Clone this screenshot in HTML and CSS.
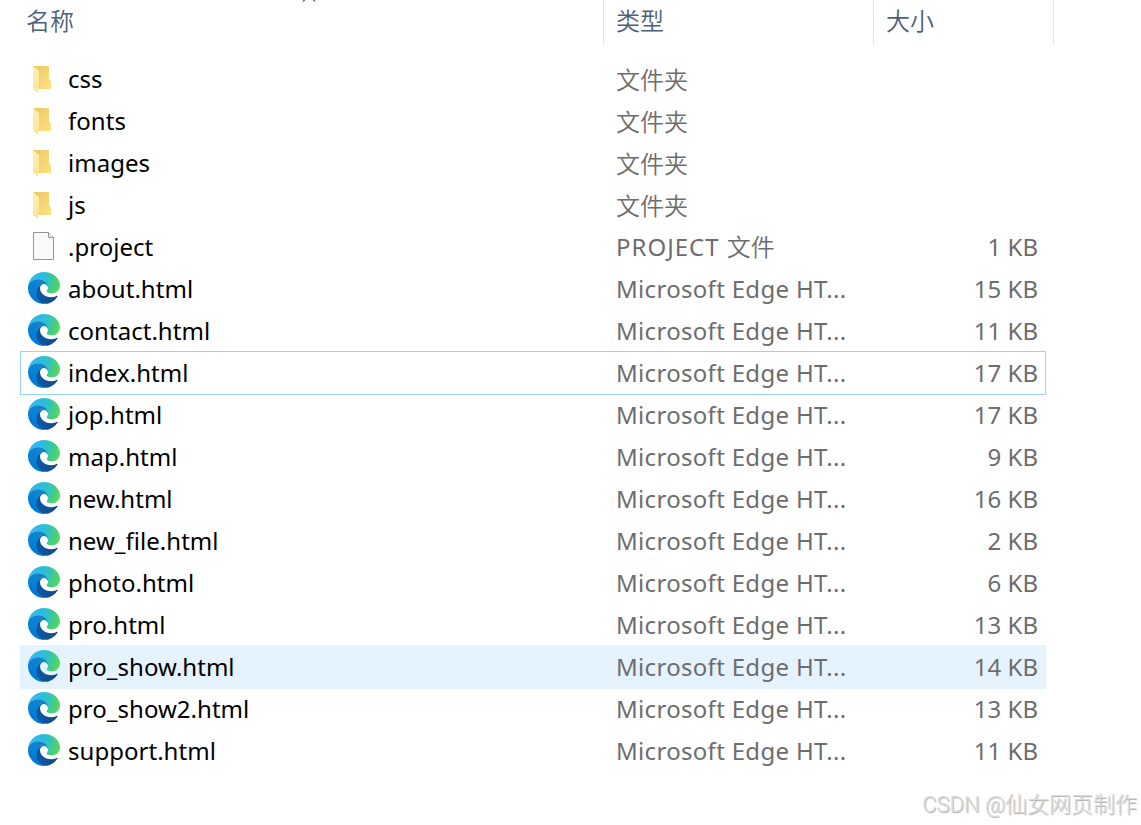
FILE: index.html
```html
<!DOCTYPE html>
<html lang="zh-CN">
<head>
    <meta charset="utf-8">
    <title>文件</title>
    <link rel="stylesheet" href="styles.css">
</head>
<body>

    <!-- shared icons -->
    <svg class="defs" width="0" height="0">
        <defs>
            <linearGradient id="fold" x1="0" y1="0" x2="1" y2="1">
                <stop offset="0" stop-color="#eac765"/>
                <stop offset="1" stop-color="#ffe07f"/>
            </linearGradient>
            <linearGradient id="flap" x1="0" y1="0" x2="0" y2="1">
                <stop offset="0" stop-color="#ffefb5"/>
                <stop offset="1" stop-color="#ffe394"/>
            </linearGradient>
            <linearGradient id="navy" x1="63" y1="178" x2="241" y2="178" gradientUnits="userSpaceOnUse">
                <stop offset="0" stop-color="#0c59a4"/>
                <stop offset="1" stop-color="#114a8b"/>
            </linearGradient>
            <linearGradient id="blue" x1="150" y1="100" x2="45" y2="218" gradientUnits="userSpaceOnUse">
                <stop offset="0" stop-color="#1b7fc4"/>
                <stop offset=".16" stop-color="#1583cc"/>
                <stop offset=".67" stop-color="#0680d7"/>
                <stop offset="1" stop-color="#0078d4"/>
            </linearGradient>
            <radialGradient id="sea" cx="30" cy="50" r="255" gradientUnits="userSpaceOnUse">
                <stop offset="0" stop-color="#35b8f1"/>
                <stop offset=".3" stop-color="#2dbbe5"/>
                <stop offset=".56" stop-color="#2fc3c0"/>
                <stop offset=".8" stop-color="#4bd070"/>
                <stop offset="1" stop-color="#66e05a"/>
            </radialGradient>
        </defs>
        <symbol id="folder" viewBox="0 0 32 32">
            <path d="M5 4h16v13l2 3v7H9z" fill="url(#fold)"/>
            <path d="M5 4l6 5v16h-1v6l-5-4z" fill="url(#flap)"/>
        </symbol>
        <symbol id="page" viewBox="0 0 32 32">
            <path d="M5.500 2.500h15l5 5v22h-20z" fill="#f8f9f9" stroke="#959595"/>
            <path d="M20.500 2.500v5h5" fill="#ededed" stroke="#959595"/>
        </symbol>
        <symbol id="edge" viewBox="4.600 4.900 256 256">
            <path fill="url(#navy)" d="M235.680 195.460a93.730 93.730 0 0 1-10.540 4.710 101.870 101.870 0 0 1-35.900 6.460c-47.320 0-88.540-32.550-88.540-74.320A31.480 31.480 0 0 1 117.130 105c-42.800 1.800-53.800 46.400-53.800 72.530 0 73.880 68.090 81.370 82.760 81.370 7.910 0 19.840-2.300 27-4.560l1.310-.44a128.340 128.340 0 0 0 66.600-52.800 4 4 0 0 0-5.320-5.640z"/>
            <path fill="url(#blue)" d="M110.340 246.340A79.200 79.200 0 0 1 87.600 225a80.720 80.720 0 0 1 29.530-120c3.120-1.470 8.450-4.130 15.540-4a32.350 32.350 0 0 1 25.690 13 31.880 31.880 0 0 1 6.360 18.660c0-.21 24.460-79.600-80-79.600-43.900 0-80 41.660-80 78.210a130.150 130.150 0 0 0 12.110 56 128 128 0 0 0 156.380 67.110 75.550 75.550 0 0 1-62.780-8z"/>
            <path fill="url(#sea)" d="M156.940 153.780c-.81 1.050-3.300 2.500-3.300 5.660 0 2.610 1.700 5.120 4.720 7.230 14.380 10 41.490 8.680 41.560 8.680a59.560 59.560 0 0 0 30.270-8.350 61.380 61.380 0 0 0 30.430-52.880c.26-22.410-8-37.310-11.340-43.910C228.090 28.760 182.350 4.920 132.610 4.920a128 128 0 0 0-128 126.200c.48-36.540 36.800-66.050 80-66.050 3.500 0 23.460.34 42 10.070 16.340 8.580 24.900 18.940 30.850 29.210 6.180 10.670 7.280 24.150 7.280 29.520s-2.740 13.330-7.800 19.910z"/>
        </symbol>
    </svg>

    <header class="head">
        <div class="col-name">名称
            <svg class="sort" width="14" height="8" viewBox="0 0 14 8"><path d="M1 7.500L7 1.500l6 6" fill="none" stroke="#5c5c5c" stroke-width="1.200"/></svg>
        </div>
        <div class="col-type">类型</div>
        <div class="col-size">大小</div>
    </header>

    <main class="files">
        <div class="row"><svg class="icon"><use href="#folder"/></svg><span class="name">css</span><span class="type folder">文件夹</span><span class="size"></span></div>
        <div class="row"><svg class="icon"><use href="#folder"/></svg><span class="name">fonts</span><span class="type folder">文件夹</span><span class="size"></span></div>
        <div class="row"><svg class="icon"><use href="#folder"/></svg><span class="name">images</span><span class="type folder">文件夹</span><span class="size"></span></div>
        <div class="row"><svg class="icon"><use href="#folder"/></svg><span class="name">js</span><span class="type folder">文件夹</span><span class="size"></span></div>
        <div class="row"><svg class="icon"><use href="#page"/></svg><span class="name">.project</span><span class="type project">PROJECT <span class="cn">文件</span></span><span class="size">1 KB</span></div>
        <div class="row"><svg class="icon"><use href="#edge"/></svg><span class="name">about.html</span><span class="type">Microsoft Edge HT...</span><span class="size">15 KB</span></div>
        <div class="row"><svg class="icon"><use href="#edge"/></svg><span class="name">contact.html</span><span class="type">Microsoft Edge HT...</span><span class="size">11 KB</span></div>
        <div class="row focused"><svg class="icon"><use href="#edge"/></svg><span class="name">index.html</span><span class="type">Microsoft Edge HT...</span><span class="size">17 KB</span></div>
        <div class="row"><svg class="icon"><use href="#edge"/></svg><span class="name">jop.html</span><span class="type">Microsoft Edge HT...</span><span class="size">17 KB</span></div>
        <div class="row"><svg class="icon"><use href="#edge"/></svg><span class="name">map.html</span><span class="type">Microsoft Edge HT...</span><span class="size">9 KB</span></div>
        <div class="row"><svg class="icon"><use href="#edge"/></svg><span class="name">new.html</span><span class="type">Microsoft Edge HT...</span><span class="size">16 KB</span></div>
        <div class="row"><svg class="icon"><use href="#edge"/></svg><span class="name">new_file.html</span><span class="type">Microsoft Edge HT...</span><span class="size">2 KB</span></div>
        <div class="row"><svg class="icon"><use href="#edge"/></svg><span class="name">photo.html</span><span class="type">Microsoft Edge HT...</span><span class="size">6 KB</span></div>
        <div class="row"><svg class="icon"><use href="#edge"/></svg><span class="name">pro.html</span><span class="type">Microsoft Edge HT...</span><span class="size">13 KB</span></div>
        <div class="row hovered"><svg class="icon"><use href="#edge"/></svg><span class="name">pro_show.html</span><span class="type">Microsoft Edge HT...</span><span class="size">14 KB</span></div>
        <div class="row"><svg class="icon"><use href="#edge"/></svg><span class="name">pro_show2.html</span><span class="type">Microsoft Edge HT...</span><span class="size">13 KB</span></div>
        <div class="row"><svg class="icon"><use href="#edge"/></svg><span class="name">support.html</span><span class="type">Microsoft Edge HT...</span><span class="size">11 KB</span></div>
    </main>

    <div class="watermark">CSDN @仙女网页制作</div>

</body>
</html>
```
FILE: styles.css
```css
* {
    box-sizing: border-box;
}

body {
    margin: 0;
    height: 825px;
    overflow: hidden;
    position: relative;
    background-color: white;
    font-family: "Noto Sans", "Noto Sans CJK SC", sans-serif;
    font-size: 24px;
    font-weight: 400;
}

.defs {
    position: absolute;
}

.head {
    display: grid;
    grid-template-columns: 604px 270px 180px;
    height: 45px;
    margin-bottom: 12px;
    line-height: 39px;
    color: #4c607a;
    font-family: "Noto Sans CJK SC", sans-serif;
    font-weight: 350;
}

.head div {
    position: relative;
    padding-left: 12px;
    border-right: 1px solid #e5e5e5;
}

.head .col-name {
    padding-left: 26px;
}

.sort {
    position: absolute;
    left: 302px;
    top: -6px;
}

.row {
    display: grid;
    grid-template-columns: 48px 548px 270px 1fr;
    grid-template-rows: 44px;
    align-items: center;
    width: 1026px;
    height: 44px;
    margin: 0 0 -2px 20px;
    padding-right: 8px;
    line-height: 44px;
    color: #6d6d6d;
    white-space: nowrap;
}

.icon {
    width: 32px;
    height: 32px;
    margin: 0 0 2px 8px;
}

.name {
    color: black;
    letter-spacing: 0.03px;
}

.type {
    letter-spacing: 0.31px;
}

.folder {
    padding-top: 2px;
    letter-spacing: 0;
    font-weight: 350;
}

.project {
    letter-spacing: 1px;
}

.project .cn {
    letter-spacing: 0;
    font-weight: 350;
}

.size {
    text-align: right;
}

.focused {
    position: relative;
    border: 1px solid #99d1ff;
    grid-template-columns: 47px 548px 270px 1fr;
    grid-template-rows: 42px;
    padding-right: 7px;
}

.focused .icon {
    margin-left: 7px;
}

.hovered {
    background-color: #e5f3ff;
}

.watermark {
    position: absolute;
    right: 4px;
    bottom: 4px;
    font-family: Roboto, "Noto Sans CJK SC", sans-serif;
    font-size: 22px;
    font-weight: 300;
    line-height: 32px;
    color: #dcdcdc;
    text-shadow: 1px 1px 1px #a8a8a8;
}
```
